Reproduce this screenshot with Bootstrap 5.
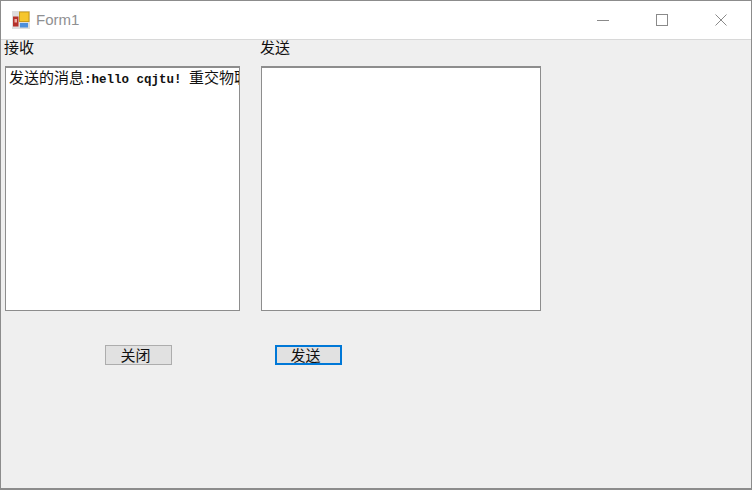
<!DOCTYPE html>
<html lang="zh">
<head>
<meta charset="utf-8">
<title>Form1</title>
<link href="https://cdn.jsdelivr.net/npm/bootstrap@5.3.0/dist/css/bootstrap.min.css" rel="stylesheet">
<style>
html,body{height:490px;overflow:hidden;background:#efefef;margin:0}
body{font-family:"Noto Sans CJK SC","Liberation Sans",sans-serif;color:#111}
.win{height:490px;border:solid #8c8c8c;border-width:1px 1px 2px 1px;background:#efefef}
.ttl{height:39px;background:#fff;border-bottom:1px solid #d8d8d8}
.ttl-name{font-family:"Liberation Sans",sans-serif;font-size:15px;color:#8f9092;margin-left:6px}
.ttl-ico{margin-left:11px}
.ctl{width:59px;height:38px}
.ctl-set{margin-right:1px}
.panes{padding-left:4px;gap:21px;height:271px}
.pane-a{width:235px}
.pane-b{width:280px}
.lbl{font-size:15px;line-height:20px;margin-left:-1px;margin-top:-3px;height:30px;margin-bottom:-1px}
.box{height:245px;background:#fff;border:1px solid #8d8d8d;border-top-width:2px;padding:0 0 0 3px;font-size:15px;line-height:18px;white-space:nowrap;overflow:hidden}
.box .lat{font-family:"Liberation Mono",monospace;font-size:12.5px;font-weight:700}
.acts{margin-top:34px;padding-left:4px}
.act{width:67px;height:20px;padding:0 6px 0 0;border:1px solid #adadad;border-radius:0;background:#e1e1e1;color:#111;font-size:15px;line-height:16px;overflow:hidden}
.act:hover{background:#e1e1e1;border-color:#adadad;color:#111}
.act-on,.act-on:hover{border:2px solid #0078d7}
.slot-a{width:256px;padding-left:100px}
.slot-b{padding-left:14px}
</style>
</head>
<body>
<div class="win">
  <div class="ttl d-flex align-items-center">
    <svg class="ttl-ico" width="18" height="18" viewBox="0 0 18 18">
      <rect x="0" y="0" width="18" height="18" fill="#dedede"/>
      <rect x="1" y="5.500" width="5.500" height="10" fill="#b5312a"/>
      <rect x="2.500" y="8" width="2.500" height="3.500" fill="#eeb0a8"/>
      <rect x="7.500" y="1" width="9.500" height="9.500" fill="#f6c62d" stroke="#c99a18" stroke-width="1"/>
      <rect x="8" y="12" width="8" height="4.500" fill="#4d8fdc"/>
    </svg>
    <span class="ttl-name">Form1</span>
    <div class="ctl-set ms-auto d-flex">
      <div class="ctl d-flex align-items-center justify-content-center"><svg width="12" height="12" viewBox="0 0 12 12"><path d="M0 6.500H12" stroke="#8a8a8a" stroke-width="1"/></svg></div>
      <div class="ctl d-flex align-items-center justify-content-center"><svg width="12" height="12" viewBox="0 0 12 12"><rect x="0.500" y="0.500" width="11" height="11" fill="none" stroke="#8a8a8a"/></svg></div>
      <div class="ctl d-flex align-items-center justify-content-center"><svg width="12" height="12" viewBox="0 0 12 12"><path d="M0.500 0.500L11.500 11.500M11.500 0.500L0.500 11.500" stroke="#8a8a8a" stroke-width="1"/></svg></div>
    </div>
  </div>
  <div class="panes d-flex">
    <div class="pane-a">
      <div class="lbl">接收</div>
      <div class="box">发送的消息<span class="lat">:hello cqjtu! </span>重交物联</div>
    </div>
    <div class="pane-b">
      <div class="lbl">发送</div>
      <div class="box"></div>
    </div>
  </div>
  <div class="acts d-flex">
    <div class="slot-a d-flex"><button type="button" class="btn act">关闭</button></div>
    <div class="slot-b d-flex"><button type="button" class="btn act act-on">发送</button></div>
  </div>
</div>
</body>
</html>
